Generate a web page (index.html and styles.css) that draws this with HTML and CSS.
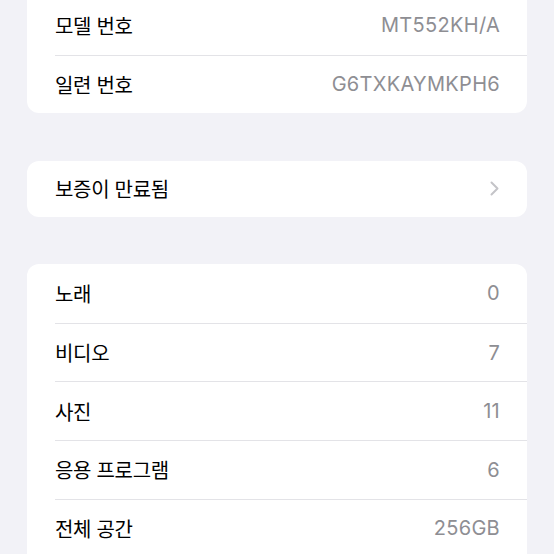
FILE: index.html
```html
<!DOCTYPE html>
<html lang="ko">
<head>
    <meta charset="UTF-8">
    <meta name="viewport" content="width=device-width, initial-scale=1.0">
    <title>정보</title>
    <link rel="stylesheet" href="styles.css">
</head>
<body>
    <div class="page">
        <div class="group first">
            <div class="row">
                <span class="label">모델 번호</span>
                <span class="value">MT552KH/A</span>
            </div>
            <div class="row">
                <span class="label">일련 번호</span>
                <span class="value">G6TXKAYMKPH6</span>
            </div>
        </div>

        <div class="group single">
            <div class="row">
                <span class="label">보증이 만료됨</span>
                <svg class="chevron" width="9" height="15" viewBox="0 0 9 15">
                    <path d="M1.5 1.5 L7.5 7.5 L1.5 13.5" fill="none" stroke="#c4c4c8" stroke-width="2" stroke-linecap="round" stroke-linejoin="round"/>
                </svg>
            </div>
        </div>

        <div class="group last">
            <div class="row">
                <span class="label">노래</span>
                <span class="value">0</span>
            </div>
            <div class="row">
                <span class="label">비디오</span>
                <span class="value">7</span>
            </div>
            <div class="row">
                <span class="label">사진</span>
                <span class="value">11</span>
            </div>
            <div class="row">
                <span class="label">응용 프로그램</span>
                <span class="value">6</span>
            </div>
            <div class="row">
                <span class="label">전체 공간</span>
                <span class="value">256GB</span>
            </div>
        </div>
    </div>
</body>
</html>
```

FILE: styles.css
```css
body {
    margin: 0;
    background: #f2f2f7;
    font-family: Inter, "Noto Sans CJK KR", sans-serif;
    color: #000;
}
.page {
    padding: 0 27px;
    display: flex;
    flex-direction: column;
    gap: 47.5px;
}
.group {
    background: #fff;
    border-radius: 12px;
    overflow: hidden;
}
.group.first {
    margin-top: -4px;
    border-top-left-radius: 0;
    border-top-right-radius: 0;
}
/* the list goes on below the fold */
.group.last {
    padding-bottom: 20px;
}
.row {
    display: flex;
    justify-content: space-between;
    align-items: center;
    height: 58.6px;
    box-sizing: border-box;
    margin-left: 28px;
    padding-right: 27px;
    border-top: 1px solid #e3e3e7;
}
.row:first-child {
    border-top: none;
}
.single .row {
    height: 56px;
}
.label {
    font-size: 20px;
    letter-spacing: -0.3px;
}
.value {
    font-size: 20px;
    color: #8e8e93;
    letter-spacing: 0.3px;
}
.chevron {
    display: block;
    margin-right: 1px;
}
```
